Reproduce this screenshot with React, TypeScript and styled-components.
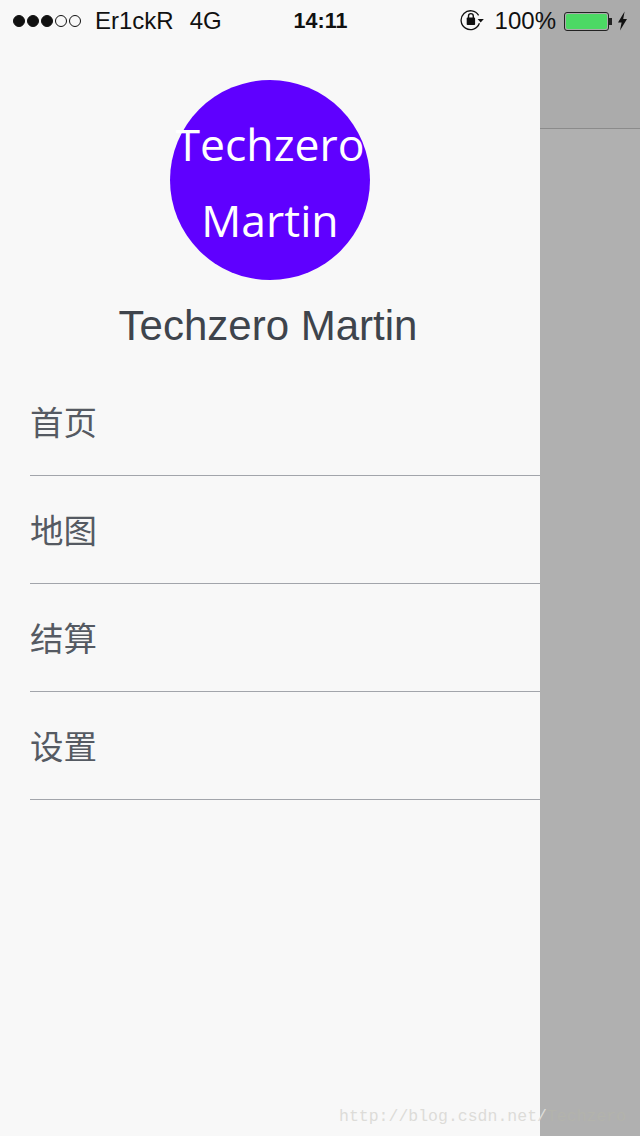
import React from 'react';
import { createGlobalStyle, styled } from 'styled-components';

const GlobalStyle = createGlobalStyle`
    html, body {
        margin: 0;
        padding: 0;
        background: #f8f8f8;
    }
`;

const menuItems = ['首页', '地图', '结算', '设置'];

export default function App() {
    return (
        <Screen>
            <GlobalStyle />
            <Drawer>
                <Avatar>
                    <span>Techzero</span>
                    <span>Martin</span>
                </Avatar>
                <UserName>Techzero Martin</UserName>
                <Menu>
                    {menuItems.map((item) => (
                        <MenuItem key={item}>{item}</MenuItem>
                    ))}
                </Menu>
            </Drawer>
            <Backdrop>
                <BackdropHeader />
            </Backdrop>
            <StatusBar>
                <StatusLeft>
                    <Signal>
                        <Dot filled />
                        <Dot filled />
                        <Dot filled />
                        <Dot />
                        <Dot />
                    </Signal>
                    <Carrier>Er1ckR</Carrier>
                    <Carrier>4G</Carrier>
                </StatusLeft>
                <Clock>14:11</Clock>
                <StatusRight>
                    <svg width="24" height="22" viewBox="0 0 24 22">
                        <path d="M18.6 5.4A9.4 9.4 0 1 0 19.4 13.2" fill="none" stroke="#111" strokeWidth="1.3" />
                        <path d="M17.6 9h6.2l-3.1 3.4z" fill="#111" />
                        <rect x="6.7" y="7.6" width="8.4" height="7.4" rx="0.8" fill="#111" />
                        <path d="M8.5 8V6a2.4 2.4 0 0 1 4.8 0v2" fill="none" stroke="#111" strokeWidth="1.4" />
                    </svg>
                    <Percent>100%</Percent>
                    <Battery>
                        <BatteryFill />
                    </Battery>
                    <BatteryCap />
                    <svg width="11" height="20" viewBox="0 0 11 20">
                        <path d="M7.6 0.5 1 11.4h3.6L3 19.5l7-11.6H6.2z" fill="#111" />
                    </svg>
                </StatusRight>
            </StatusBar>
            <Watermark>
                http://blog.csdn.net/<WatermarkTail>Techzero</WatermarkTail>
            </Watermark>
        </Screen>
    );
}

const Screen = styled.div`
    position: relative;
    display: flex;
    width: 640px;
    height: 1136px;
    overflow: hidden;
`;

const Drawer = styled.aside`
    display: flex;
    flex-direction: column;
    align-items: center;
    width: 540px;
    padding-top: 80px;
    box-sizing: border-box;
    background: #f8f8f8;
`;

const Avatar = styled.div`
    display: flex;
    flex-direction: column;
    align-items: center;
    justify-content: center;
    width: 200px;
    height: 200px;
    padding-top: 3px;
    box-sizing: border-box;
    border-radius: 50%;
    background: #5f00ff;
    color: #fff;
    font-family: "Open Sans", sans-serif;
    font-size: 44.5px;
    line-height: 76px;
    white-space: nowrap;
`;

const UserName = styled.div`
    margin-top: 22px;
    padding-right: 4px;
    height: 48px;
    color: #3e444c;
    font-family: "Liberation Sans", sans-serif;
    font-size: 42px;
    line-height: 48px;
    white-space: nowrap;
`;

const Menu = styled.nav`
    align-self: stretch;
    margin-top: 17px;
    padding-left: 30px;
`;

const MenuItem = styled.div`
    display: flex;
    align-items: center;
    height: 107px;
    padding-bottom: 1px;
    box-sizing: content-box;
    border-bottom: 1px solid #a2a5ab;
    margin-top: -1px;
    color: #555a62;
    font-family: "Liberation Sans", "Noto Sans CJK SC", sans-serif;
    font-size: 33.5px;

    &:first-child {
        margin-top: 0;
    }
`;

const Backdrop = styled.div`
    flex: 1;
    background: #b0b0b0;
`;

const BackdropHeader = styled.div`
    height: 129px;
    box-sizing: border-box;
    background: #ababab;
    border-bottom: 1px solid #8b8b8b;
`;

const StatusBar = styled.div`
    position: absolute;
    top: 1px;
    left: 0;
    right: 0;
    display: flex;
    align-items: center;
    height: 40px;
    padding: 0 12px 0 13px;
    color: #111;
    font-family: "Liberation Sans", sans-serif;
    font-size: 24px;
`;

const StatusLeft = styled.div`
    display: flex;
    flex: 1;
    align-items: center;
`;

const Signal = styled.div`
    display: flex;
    gap: 2px;
    margin-right: 14px;
`;

const Dot = styled.span<{ filled?: boolean }>`
    width: 12px;
    height: 12px;
    box-sizing: border-box;
    border-radius: 50%;
    border: 1px solid #111;
    background: ${(props) => (props.filled ? '#111' : 'transparent')};
`;

const Carrier = styled.span`
    margin-right: 16px;
`;

const Clock = styled.div`
    font-size: 21.5px;
    font-weight: 700;
`;

const StatusRight = styled.div`
    display: flex;
    flex: 1;
    align-items: center;
    justify-content: flex-end;
`;

const Percent = styled.span`
    margin: 0 8px 0 11px;
`;

const Battery = styled.div`
    width: 45px;
    height: 19px;
    box-sizing: border-box;
    padding: 1px;
    border: 1px solid #222;
    border-radius: 3px;
`;

const BatteryFill = styled.div`
    height: 100%;
    border-radius: 2px;
    background: #4cd964;
`;

const BatteryCap = styled.div`
    width: 3px;
    height: 7px;
    margin-right: 5px;
    background: #222;
`;

const Watermark = styled.div`
    position: absolute;
    left: 339px;
    bottom: 9px;
    color: #dddcd8;
    font-family: "Liberation Mono", monospace;
    font-size: 16.5px;
    line-height: 20px;
    white-space: nowrap;
`;

const WatermarkTail = styled.span`
    color: #b3b3ac;
`;
